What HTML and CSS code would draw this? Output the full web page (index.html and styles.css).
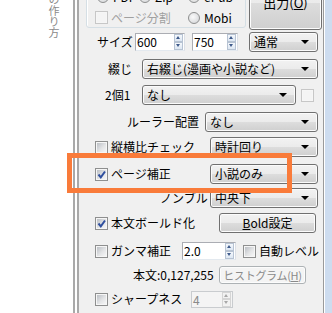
FILE: index.html
```html
<!DOCTYPE html>
<html lang="ja">

<head>
    <meta charset="utf-8">
    <title>chainLP</title>
    <link rel="stylesheet" href="styles.css">
</head>

<body>
    <div class="window">
        <div class="side">
            <p class="vtext">の作り方</p>
        </div>
        <div class="split"></div>
        <div class="panel">
            <div class="top">
                <div class="group">
                    <div class="opts">
                        <label class="opt"><span class="radio"></span>PDF</label>
                        <label class="opt"><span class="radio"></span>Zip</label>
                        <label class="opt"><span class="radio on"></span>ePub</label>
                        <label class="opt off span2"><span class="cb off"></span>ページ分割</label>
                        <label class="opt"><span class="radio"></span>Mobi</label>
                    </div>
                </div>
                <div class="btn big">出力(<u>O</u>)</div>
            </div>

            <div class="form">
                <!-- サイズ -->
                <div class="row r_size">
                    <span class="lbl w38">サイズ</span>
                    <div class="spin w50"><span class="val">600</span><span class="arrows"><i class="up"></i><i class="dn"></i></span></div>
                    <div class="spin w46 ml7"><span class="val">750</span><span class="arrows"><i class="up"></i><i class="dn"></i></span></div>
                    <div class="combo w69 ml11">通常</div>
                </div>
                <!-- 綴じ -->
                <div class="row r_toji">
                    <span class="lbl w34">綴じ</span>
                    <div class="combo w176">右綴じ(漫画や小説など)</div>
                </div>
                <!-- 2個1 -->
                <div class="row r_niko">
                    <span class="lbl w37">2個1</span>
                    <div class="combo w154">なし</div>
                    <span class="cb off ml5"></span>
                </div>
                <div class="row r_ruler">
                    <span class="lbl w78">ルーラー配置</span>
                    <div class="combo w113">なし</div>
                </div>
                <div class="row r_chk">
                    <span class="cb"></span>
                    <span class="lbl w99 ml3">縦横比チェック</span>
                    <div class="combo w108">時計回り</div>
                </div>
                <div class="row r_chk">
                    <span class="cb on"><svg viewBox="0 0 11 11"><path d="M2.5 5.5 L4.8 8.3 L9 2.5" /></svg></span>
                    <span class="lbl w99 ml3">ページ補正</span>
                    <div class="combo w108">小説のみ</div>
                </div>
                <div class="row r_nombre">
                    <span class="lbl w50">ノンブル</span>
                    <div class="combo w108">中央下</div>
                </div>
                <div class="row r_chk">
                    <span class="cb on"><svg viewBox="0 0 11 11"><path d="M2.5 5.5 L4.8 8.3 L9 2.5" /></svg></span>
                    <span class="lbl w108 ml3">本文ボールド化</span>
                    <div class="btn w97"><u>B</u>old設定</div>
                </div>
                <div class="row r_chk">
                    <span class="cb"></span>
                    <span class="lbl w71 ml3">ガンマ補正</span>
                    <div class="spin w54"><span class="val">2.0</span><span class="arrows"><i class="up"></i><i class="dn"></i></span></div>
                    <span class="cb ml7"></span>
                    <span class="lbl ml3">自動レベル</span>
                </div>
                <div class="row r_hist">
                    <span class="lbl w86">本文:0,127,255</span>
                    <div class="btn off w87">ヒストグラム(<u>H</u>)</div>
                </div>
                <div class="row r_chk">
                    <span class="cb"></span>
                    <span class="lbl w80 ml3">シャープネス</span>
                    <div class="spin off w42"><span class="val">4</span><span class="arrows"><i class="up"></i><i class="dn"></i></span></div>
                </div>
            </div>
        </div>
        <div class="frame"></div>

        <!-- 強調枠 -->
        <div class="mark"></div>
    </div>
</body>

</html>
```

FILE: styles.css
```css
* {
    margin: 0;
    padding: 0;
    box-sizing: border-box;
}

html,
body {
    width: 332px;
    height: 313px;
    overflow: hidden;
    background: #fff;
}

body {
    font-family: "Noto Sans CJK JP", "Liberation Sans", sans-serif;
    font-size: 12px;
    line-height: 14px;
    color: #000;
}

u {
    text-decoration: underline;
    text-underline-offset: 1px;
}

.window {
    position: relative;
    display: flex;
    height: 313px;
}

.side {
    width: 73px;
    flex: none;
    overflow: hidden;
}

.vtext {
    writing-mode: vertical-rl;
    font-size: 11px;
    line-height: 11px;
    color: #8a8a8a;
    margin: -6px 0 0 48px;
}

.split {
    width: 6px;
    flex: none;
    border-left: 2px solid #a9a9a9;
    border-right: 2px solid #a9a9a9;
    background: #fff;
}

.panel {
    width: 244px;
    flex: none;
    background: #f0f0f0;
    overflow: hidden;
}

.frame {
    flex: 1;
    border-left: 1px solid #9a9a9a;
    box-shadow: inset 1px 0 0 #fff;
    background: #cddcef;
}

/* 上段 */
.top {
    display: flex;
    margin: -24px 0 0 7px;
}

.group {
    width: 160px;
    height: 52px;
    border: 1px solid #d5dfe5;
    border-radius: 3px;
    box-shadow: inset 1px 1px 0 #fff;
}

.opts {
    display: grid;
    grid-template-columns: 42px 49px auto;
    grid-auto-rows: 21px;
    padding: 9px 0 0 10px;
}

.opt {
    display: flex;
    align-items: center;
    gap: 4px;
}

.opt.span2 {
    grid-column: span 2;
    margin-left: -2px;
    gap: 3px;
}

.opt.off {
    color: #a0a0a0;
}

.btn {
    display: flex;
    align-items: center;
    justify-content: center;
    flex: none;
    height: 20px;
    border: 1px solid #707070;
    border-radius: 3px;
    background: linear-gradient(#f2f2f2, #ebebeb 50%, #dddddd 50%, #cfcfcf);
    box-shadow: inset 0 0 0 1px #fcfcfc;
    white-space: nowrap;
}

.btn.big {
    width: 73px;
    height: 54px;
    margin-left: 3px;
    font-size: 13px;
}

.btn.off {
    height: 18px;
    border-color: #adb2b5;
    background: #f4f4f4;
    color: #8a8a8a;
    font-size: 11px;
    letter-spacing: -0.3px;
}

/* 各行 */
.form {
    display: grid;
    grid-template-rows: 27px 26px 27px 25px 27px 24px 25px 28px 25px 23px 24px;
    margin-top: 2px;
}

.row {
    display: flex;
    align-items: center;
    height: 20px;
}

.r_size {
    padding-left: 18px;
}

.r_toji {
    padding-left: 29px;
}

.r_niko {
    padding-left: 26px;
}

.r_ruler {
    padding-left: 48px;
}

.r_chk {
    padding-left: 16px;
}

.r_nombre {
    padding-left: 81px;
}

.r_hist {
    padding-left: 54px;
    height: 18px;
}

.lbl {
    flex: none;
    white-space: nowrap;
}

.combo {
    position: relative;
    flex: none;
    height: 20px;
    padding: 2px 0 0 4px;
    border: 1px solid #707070;
    border-radius: 3px;
    background: linear-gradient(#f2f2f2, #ebebeb 50%, #dddddd 50%, #cfcfcf);
    box-shadow: inset 0 0 0 1px #fbfbfb;
    white-space: nowrap;
}

.combo::after {
    content: "";
    position: absolute;
    right: 8px;
    top: 7px;
    border-left: 4px solid transparent;
    border-right: 4px solid transparent;
    border-top: 4px solid #000;
}

.spin {
    display: flex;
    flex: none;
    height: 18px;
    border: 1px solid #abadb3;
    border-right-color: #dbdfe6;
    border-bottom-color: #e3e9ef;
    background: #fff;
}

.spin .val {
    flex: 1;
    padding: 1px 0 0 1px;
}

.arrows {
    width: 9px;
    display: flex;
    flex-direction: column;
    margin: 0 1px 0 0;
}

.arrows i {
    position: relative;
    flex: 1;
    border: 1px solid #b7c3d3;
    background: linear-gradient(#f5f8fc, #dde7f3);
}

.arrows i::after {
    content: "";
    position: absolute;
    left: 1px;
    top: 1px;
    border-left: 2.5px solid transparent;
    border-right: 2.5px solid transparent;
}

.arrows .up::after {
    border-bottom: 3px solid #3e5a8a;
}

.arrows .dn::after {
    border-top: 3px solid #3e5a8a;
}

.spin.off {
    height: 17px;
    border-color: #c9cccf;
    background: #f4f4f4;
    color: #8a8a8a;
}

.spin.off .arrows i {
    border-color: #d5d5d5;
    background: #f2f2f2;
}

.spin.off .arrows .up::after {
    border-bottom-color: #a8a8a8;
}

.spin.off .arrows .dn::after {
    border-top-color: #a8a8a8;
}

/* チェック・ラジオ */
.cb {
    flex: none;
    width: 13px;
    height: 13px;
    border: 1px solid #8e8f8f;
    box-shadow: inset 0 0 0 1px #f6f6f6;
    background: linear-gradient(135deg, #b3b8be, #e3e4e6 55%, #fafafa);
}

.cb svg {
    display: block;
    width: 11px;
    height: 11px;
}

.cb path {
    fill: none;
    stroke: #2f4f9e;
    stroke-width: 2;
}

.cb.off {
    border-color: #c7c7c7;
    background: #f4f4f4;
}

.radio {
    flex: none;
    width: 12px;
    height: 12px;
    border: 1px solid #8e8f8f;
    border-radius: 50%;
    background: radial-gradient(circle at 40% 40%, #fafafa, #cfd1d4);
}

.radio.on {
    background: radial-gradient(circle, #2c4f7e 0, #5d86b8 3px, #e6e6e6 3.5px, #d3d5d8);
}

/* 幅・余白 */
.w34 { width: 34px; }
.w37 { width: 37px; }
.w38 { width: 38px; }
.w42 { width: 42px; }
.w46 { width: 46px; }
.w50 { width: 50px; }
.w54 { width: 54px; }
.w69 { width: 69px; }
.w71 { width: 71px; }
.w78 { width: 78px; }
.w80 { width: 80px; }
.w86 { width: 86px; }
.w87 { width: 87px; }
.w97 { width: 97px; }
.w99 { width: 99px; }
.w108 { width: 108px; }
.w113 { width: 113px; }
.w154 { width: 154px; }
.w176 { width: 176px; }

.ml3 { margin-left: 3px; }
.ml5 { margin-left: 5px; }
.ml7 { margin-left: 7px; }
.ml11 { margin-left: 11px; }

/* 強調枠 */
.mark {
    position: absolute;
    left: 67px;
    top: 153px;
    width: 225px;
    height: 40px;
    border: 5px solid #f97b3a;
}
```
